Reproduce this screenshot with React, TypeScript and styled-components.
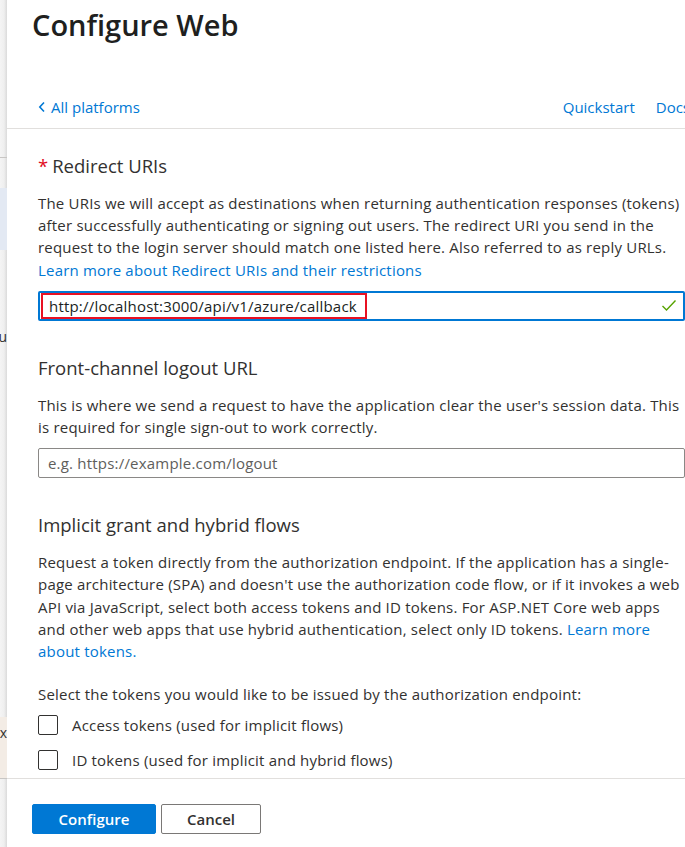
import React from "react";
import styled, { createGlobalStyle } from "styled-components";

const GlobalStyle = createGlobalStyle`
  html, body {
    margin: 0;
    padding: 0;
    overflow: hidden;
    background: #ffffff;
  }
  body {
    font-family: "Open Sans", "Noto Sans", sans-serif;
    color: #323130;
  }
`;

const Page = styled.div`
  display: flex;
  height: 847px;
  width: 685px;
  overflow: hidden;
`;

const Strip = styled.div`
  flex: 0 0 7px;
  width: 7px;
  min-width: 0;
  overflow: hidden;
  display: flex;
  flex-direction: column;
  background: linear-gradient(to right, #f4f4f4 0, #efefef 4px, #dadada 7px);
`;

const StripBlock = styled.div<{ $h: number; $bg?: string; $line?: boolean }>`
  flex: 0 0 ${(p) => p.$h}px;
  box-sizing: border-box;
  background: ${(p) => p.$bg || "transparent"};
  border-bottom: ${(p) => (p.$line ? "1px solid #c8c6c4" : "none")};
  display: flex;
  justify-content: flex-end;
  align-items: flex-start;
  overflow: hidden;
  font-size: 14px;
  line-height: 18px;
  color: #323130;
  white-space: nowrap;
`;

const StripGlyph = styled.span`
  padding-top: 7px;
`;

const Panel = styled.div`
  flex: 0 0 740px;
  display: flex;
  flex-direction: column;
  background: #ffffff;
`;

const Header = styled.header`
  border-bottom: 1px solid #e1dfdd;
`;

const Title = styled.h1`
  margin: 0;
  padding: 6px 0 0 25px;
  font-size: 29px;
  font-weight: 600;
  line-height: 38px;
  color: #201f1e;
`;

const NavRow = styled.nav`
  display: flex;
  align-items: center;
  gap: 21px;
  padding: 52px 57px 10px 31px;
  font-size: 15px;
  line-height: 22px;
`;

const NavLink = styled.a<{ $push?: boolean }>`
  display: flex;
  align-items: center;
  gap: 5px;
  color: #0078d4;
  text-decoration: none;
  margin-left: ${(p) => (p.$push ? "auto" : "0")};
`;

const Body = styled.main`
  flex: 1;
  overflow: hidden;
  padding: 24px 0 0 31px;
`;

const Section = styled.section`
  width: 647px;
  margin-bottom: 34px;
`;

const SectionTitle = styled.h2`
  margin: 0 0 13px;
  font-size: 18.5px;
  font-weight: 400;
  line-height: 26px;
  color: #323130;
`;

const Required = styled.span`
  color: #e00b1c;
  margin-right: 4px;
`;

const Text = styled.p<{ $gap?: number }>`
  margin: ${(p) => p.$gap || 0}px 0 10px;
  font-size: 15px;
  letter-spacing: 0.2px;
  line-height: 22.2px;
  color: #323130;
`;

const Link = styled.a`
  color: #0078d4;
  text-decoration: none;
`;

const Field = styled.div<{ $active?: boolean }>`
  display: flex;
  align-items: stretch;
  box-sizing: border-box;
  height: 30px;
  border: ${(p) => (p.$active ? "2px solid #0078d4" : "1px solid #8a8886")};
  border-radius: 2px;
  padding: ${(p) => (p.$active ? "0 6px 0 1px" : "0 9px")};
  font-size: 15px;
  letter-spacing: 0.2px;
  line-height: 22px;
`;

const Marked = styled.span`
  display: flex;
  align-items: center;
  padding: 0 8px 0 6px;
  border: 2px solid #e81123;
  color: #201f1e;
`;

const Placeholder = styled.span`
  display: flex;
  align-items: center;
  color: #605e5c;
`;

const Valid = styled.span`
  margin-left: auto;
  display: flex;
  align-items: center;
`;

const CheckRow = styled.label`
  display: flex;
  align-items: center;
  gap: 14px;
  margin-bottom: 15px;
  font-size: 15px;
  letter-spacing: 0.2px;
  line-height: 20px;
`;

const Box = styled.span`
  flex: 0 0 20px;
  height: 20px;
  box-sizing: border-box;
  border: 1px solid #323130;
  border-radius: 2px;
`;

const Footer = styled.footer`
  flex: 0 0 69px;
  box-sizing: border-box;
  border-top: 1px solid #e1dfdd;
  display: flex;
  align-items: flex-start;
  gap: 5px;
  padding: 25px 0 0 25px;
`;

const Button = styled.button<{ $primary?: boolean }>`
  box-sizing: border-box;
  height: 30px;
  min-width: ${(p) => (p.$primary ? "124px" : "100px")};
  border-radius: 2px;
  border: 1px solid ${(p) => (p.$primary ? "#0078d4" : "#7a7876")};
  background: ${(p) => (p.$primary ? "#0078d4" : "#ffffff")};
  color: ${(p) => (p.$primary ? "#ffffff" : "#323130")};
  font-family: inherit;
  font-size: 15px;
  font-weight: 600;
  padding: 0 16px;
`;

const Chevron = () => (
  <svg width="8" height="12" viewBox="0 0 8 12" aria-hidden>
    <path d="M6 1.5 1.8 6 6 10.5" fill="none" stroke="#0078d4" strokeWidth="1.6" />
  </svg>
);

const Tick = () => (
  <svg width="16" height="13" viewBox="0 0 16 13" aria-hidden>
    <path d="M1.5 7 5.5 11 14.5 1.5" fill="none" stroke="#57a300" strokeWidth="1.4" />
  </svg>
);

const App = () => {
  return (
    <Page>
      <GlobalStyle />
      <Strip>
        <StripBlock $h={158} $line />
        <StripBlock $h={30} />
        <StripBlock $h={62} $bg="#e3e9f3" />
        <StripBlock $h={78} />
        <StripBlock $h={18}>Menu</StripBlock>
        <StripBlock $h={371} />
        <StripBlock $h={62} $bg="#f3ece5" $line>
          <StripGlyph>x</StripGlyph>
        </StripBlock>
      </Strip>
      <Panel>
        <Header>
          <Title>Configure Web</Title>
          <NavRow>
            <NavLink href="#">
              <Chevron />
              All platforms
            </NavLink>
            <NavLink href="#" $push>
              Quickstart
            </NavLink>
            <NavLink href="#">Docs</NavLink>
          </NavRow>
        </Header>
        <Body>
          <Section>
            <SectionTitle>
              <Required>*</Required>Redirect URIs
            </SectionTitle>
            <Text>
              The URIs we will accept as destinations when returning authentication responses (tokens)
              after successfully authenticating or signing out users. The redirect URI you send in the
              request to the login server should match one listed here. Also referred to as reply URLs.{" "}
              <Link href="#">Learn more about Redirect URIs and their restrictions</Link>
            </Text>
            <Field $active>
              <Marked>http://localhost:3000/api/v1/azure/callback</Marked>
              <Valid>
                <Tick />
              </Valid>
            </Field>
          </Section>
          <Section>
            <SectionTitle>Front-channel logout URL</SectionTitle>
            <Text>
              This is where we send a request to have the application clear the user's session data. This
              is required for single sign-out to work correctly.
            </Text>
            <Field>
              <Placeholder>e.g. https://example.com/logout</Placeholder>
            </Field>
          </Section>
          <Section>
            <SectionTitle>Implicit grant and hybrid flows</SectionTitle>
            <Text>
              Request a token directly from the authorization endpoint. If the application has a single-page
              architecture (SPA) and doesn't use the authorization code flow, or if it invokes a web API via
              JavaScript, select both access tokens and ID tokens. For ASP.NET Core web apps and other web
              apps that use hybrid authentication, select only ID tokens.{" "}
              <Link href="#">Learn more about tokens.</Link>
            </Text>
            <Text $gap={21}>
              Select the tokens you would like to be issued by the authorization endpoint:
            </Text>
            <CheckRow>
              <Box />
              Access tokens (used for implicit flows)
            </CheckRow>
            <CheckRow>
              <Box />
              ID tokens (used for implicit and hybrid flows)
            </CheckRow>
          </Section>
        </Body>
        <Footer>
          <Button $primary>Configure</Button>
          <Button>Cancel</Button>
        </Footer>
      </Panel>
    </Page>
  );
};

export default App;
